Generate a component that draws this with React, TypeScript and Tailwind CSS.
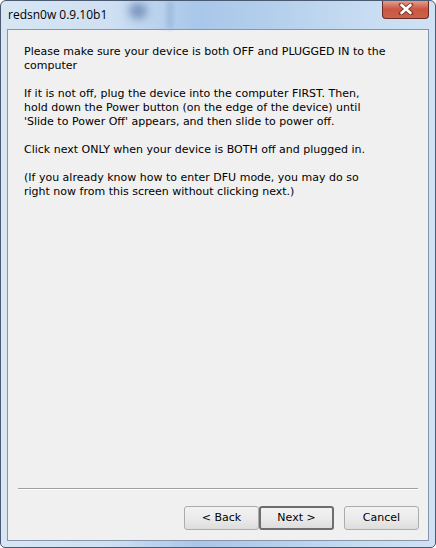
const body = "font-['Tahoma','DejaVu_Sans',sans-serif]";

const Button = ({ label, primary }: { label: string; primary?: boolean }) => (
  <div
    className={`w-[75px] h-[24px] flex items-center justify-center rounded-[3px] text-[11px] text-black bg-gradient-to-b from-[#f2f2f2] via-[#ebebeb] to-[#dddddd] ${
      primary
        ? 'border-2 border-[#6e6e6e]'
        : 'border border-[#acacac]'
    } ${body}`}
  >
    {label}
  </div>
);

export default function App() {
  return (
    <div className="w-[436px] h-[548px] bg-white">
      <div className="w-full h-full flex flex-col rounded-t-[6px] rounded-b-[5px] border border-[#4a5a70] bg-[linear-gradient(90deg,#d8e6f4_0%,#cfe0f2_25%,#a9c7ea_45%,#b4cfec_62%,#c8ddf2_85%,#cfe2f4_100%)] overflow-hidden">
        {/* Title bar */}
        <div className="relative h-[28px] shrink-0 flex items-start justify-between pl-[7px] pr-[6px]">
          <div className="absolute left-[128px] top-[2px] w-[18px] h-[16px] rounded-full bg-[#5b7aa8] blur-[4px] opacity-70" />
          <div className="absolute left-[166px] top-0 w-[6px] h-[28px] bg-[#8fb0d6] blur-[2px] opacity-60" />
          <span className="relative mt-[5px] text-[12px] text-black font-['Open_Sans','Noto_Sans',sans-serif]">
            redsn0w 0.9.10b1
          </span>
          <div className="relative w-[47px] h-[19px] -mt-px rounded-b-[4px] border border-t-0 border-[#6b2a22] bg-gradient-to-b from-[#e8a496] via-[#cb5641] to-[#c9634c] flex items-center justify-center">
            <svg width="16" height="12" viewBox="0 0 16 12">
              <path
                d="M3 1.5 L13 10.5 M13 1.5 L3 10.5"
                stroke="#4a1a12"
                strokeWidth="4.5"
                strokeLinecap="round"
                opacity="0.55"
              />
              <path
                d="M3.5 2 L12.5 10 M12.5 2 L3.5 10"
                stroke="#ffffff"
                strokeWidth="2.6"
                strokeLinecap="round"
              />
            </svg>
          </div>
        </div>

        {/* Client area */}
        <div className="flex-1 mx-[6px] mb-[6px] border border-[#8795ab] bg-[#f0f0f0] flex flex-col">
          <div
            className={`flex-1 pt-[15px] pl-[16px] text-[11px] leading-[14px] text-black flex flex-col gap-[14px] ${body}`}
          >
            <p>
              Please make sure your device is both OFF and PLUGGED IN to the
              <br />
              computer
            </p>
            <p>
              If it is not off, plug the device into the computer FIRST. Then,
              <br />
              hold down the Power button (on the edge of the device) until
              <br />
              'Slide to Power Off' appears, and then slide to power off.
            </p>
            <p>Click next ONLY when your device is BOTH off and plugged in.</p>
            <p>
              (If you already know how to enter DFU mode, you may do so
              <br />
              right now from this screen without clicking next.)
            </p>
          </div>
          <div className="mx-[10px] h-px bg-[#a0a0a0] border-b border-white box-content" />
          <div className="h-[50px] flex items-start justify-end pt-[16px] pr-[9px]">
            <Button label="< Back" />
            <Button label="Next >" primary />
            <div className="w-[10px]" />
            <Button label="Cancel" />
          </div>
        </div>
      </div>
    </div>
  );
}
